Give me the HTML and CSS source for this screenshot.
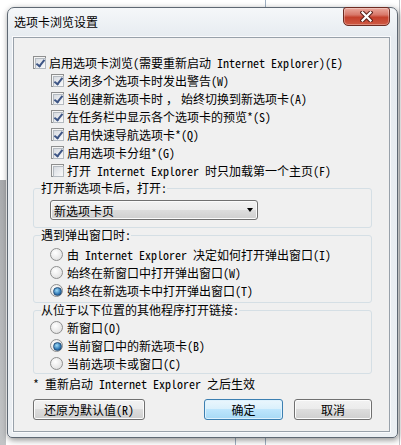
FILE: index.html
```html
<!DOCTYPE html>
<html lang="zh-CN">
<head>
    <meta charset="UTF-8">
    <meta name="viewport" content="width=device-width, initial-scale=1.0">
    <title>选项卡浏览设置</title>
    <link rel="stylesheet" href="styles.css">
</head>
<body>
    <div class="window">
        <div class="titlebar">
            <span class="title">选项卡浏览设置</span>
            <div class="close">
                <svg width="13" height="11" viewBox="0 0 13 11">
                    <path d="M2.5 1.5 L10.5 9.5 M10.5 1.5 L2.5 9.5" stroke="#5a2019" stroke-width="4.2" stroke-linecap="square" fill="none"/>
                    <path d="M2.5 1.5 L10.5 9.5 M10.5 1.5 L2.5 9.5" stroke="#ffffff" stroke-width="2.2" stroke-linecap="square" fill="none"/>
                </svg>
            </div>
        </div>
        <div class="client">
            <div class="row"><span class="check on"></span>启用选项卡浏览(需要重新启动 Internet Explorer)(E)</div>
            <div class="sub">
                <div class="row"><span class="check on"></span>关闭多个选项卡时发出警告(W)</div>
                <div class="row"><span class="check on"></span>当创建新选项卡时<span class="full">，</span>始终切换到新选项卡(A)</div>
                <div class="row"><span class="check on"></span>在任务栏中显示各个选项卡的预览*(S)</div>
                <div class="row"><span class="check on"></span>启用快速导航选项卡*(Q)</div>
                <div class="row"><span class="check on"></span>启用选项卡分组*(G)</div>
                <div class="row"><span class="check"></span>打开 Internet Explorer 时只加载第一个主页(F)</div>
            </div>

            <fieldset class="group first">
                <legend>打开新选项卡后<span class="full">，</span>打开:</legend>
                <div class="group-body combo-body">
                    <div class="combo"><span>新选项卡页</span><span class="arrow"></span></div>
                </div>
            </fieldset>

            <fieldset class="group">
                <legend>遇到弹出窗口时:</legend>
                <div class="group-body popup-body">
                    <div class="row radio-row"><span class="radio"></span>由 Internet Explorer 决定如何打开弹出窗口(I)</div>
                    <div class="row radio-row"><span class="radio"></span>始终在新窗口中打开弹出窗口(W)</div>
                    <div class="row radio-row"><span class="radio on"></span>始终在新选项卡中打开弹出窗口(T)</div>
                </div>
            </fieldset>

            <fieldset class="group">
                <legend>从位于以下位置的其他程序打开链接:</legend>
                <div class="group-body links-body">
                    <div class="row radio-row"><span class="radio"></span>新窗口(O)</div>
                    <div class="row radio-row"><span class="radio on"></span>当前窗口中的新选项卡(B)</div>
                    <div class="row radio-row"><span class="radio"></span>当前选项卡或窗口(C)</div>
                </div>
            </fieldset>

            <p class="note">* 重新启动 Internet Explorer 之后生效</p>

            <div class="buttons">
                <button class="btn btn-reset">还原为默认值(R)</button>
                <button class="btn btn-ok">确定</button>
                <button class="btn btn-cancel">取消</button>
            </div>
        </div>
    </div>
</body>
</html>
```

FILE: styles.css
```css
* {
    box-sizing: border-box;
}
body {
    margin: 0;
    padding: 7px 0 0 7px;
    width: 401px;
    height: 445px;
    overflow: hidden;
    background-color: #fff;
    background-image:
        linear-gradient(#9fb0c2, #9fb0c2),
        linear-gradient(#9fb0c2, #9fb0c2),
        linear-gradient(#c4c7cb, #c4c7cb),
        linear-gradient(#a9abae, #c2c4c6);
    background-size: 1px 445px, 1px 12px, 1px 445px, 6px 265px;
    background-position: 265px 0, 235px 433px, 399px 0, 0 180px;
    background-repeat: no-repeat;
    font-family: "Noto Sans CJK SC", "Liberation Sans", sans-serif;
    font-size: 12px;
    font-feature-settings: "hwid";
    color: #000;
}
.full {
    font-feature-settings: normal;
}
.window {
    width: 391px;
    height: 431px;
    padding: 0 7px 5px 5px;
    border: 1px solid #5e6873;
    border-radius: 7px 7px 5px 5px;
    background: linear-gradient(#f5f7f9, #e6ebf0 30px, #ebeff3);
    box-shadow: 1px 2px 6px rgba(0, 0, 0, 0.45);
    display: flex;
    flex-direction: column;
}
.titlebar {
    height: 29px;
    display: flex;
    justify-content: space-between;
    align-items: flex-start;
}
.title {
    padding: 7px 0 0 1px;
    line-height: 14px;
}
.close {
    width: 47px;
    height: 19px;
    margin-top: -1px;
    border: 1px solid #6d2b22;
    border-radius: 3px 3px 5px 5px;
    background: linear-gradient(#eba99d, #d8786a 40%, #c4402c 55%, #cf5a44 100%);
    box-shadow: inset 0 0 0 1px rgba(255, 255, 255, 0.3);
    display: flex;
    justify-content: center;
    align-items: center;
}
.client {
    flex: 1;
    padding: 15px 17px 6px 19px;
    background: #f0f0f0;
    border: 1px solid #98a1aa;
    box-shadow: 0 0 0 1px #f9fafc;
}
.row {
    display: flex;
    align-items: center;
    gap: 3px;
    height: 18px;
    white-space: nowrap;
}
.sub .row {
    padding-left: 18px;
}
.radio-row {
    gap: 4px;
}
.check {
    position: relative;
    flex: none;
    width: 13px;
    height: 13px;
    padding: 1px;
    border: 1px solid #8e8f8f;
    background: #f4f4f4;
}
.check::before {
    content: "";
    display: block;
    width: 9px;
    height: 9px;
    border: 1px solid #b4bac0;
    background: linear-gradient(135deg, #d6dae0, #fbfbfb);
}
.check.on::after {
    content: "";
    position: absolute;
    left: 4px;
    top: 1px;
    width: 3px;
    height: 7px;
    border: solid #3d5585;
    border-width: 0 2px 2px 0;
    transform: rotate(38deg);
}
.radio {
    position: relative;
    flex: none;
    width: 13px;
    height: 13px;
    border: 1px solid #8e8f8f;
    border-radius: 50%;
    background: radial-gradient(circle at 40% 35%, #fff, #e6e6e6 65%, #cfcfcf);
}
.radio.on::after {
    content: "";
    position: absolute;
    left: 2px;
    top: 2px;
    width: 7px;
    height: 7px;
    border-radius: 50%;
    border: 1px solid #26507a;
    background: radial-gradient(circle at 40% 35%, #9fdcf8, #2f77b4 60%, #1a4a7c);
}
.group {
    margin: 0;
    padding: 0;
    min-width: 0;
    border: 1px solid #d5dfe5;
    border-radius: 3px;
}
.group.first {
    margin-top: 2px;
}
.group legend {
    margin-left: 7px;
    padding: 0;
    line-height: 14px;
}
.group-body {
    padding: 3px 16px;
}
.combo-body {
    padding: 5px 16px 7px;
}
.links-body {
    padding: 1px 16px;
}
.combo {
    width: 208px;
    height: 20px;
    padding: 0 4px 0 3px;
    border: 1px solid #707070;
    border-radius: 3px;
    background: linear-gradient(#f2f2f2, #ebebeb 50%, #dddddd 50%, #cfcfcf);
    box-shadow: inset 0 0 0 1px #fbfbfb;
    display: flex;
    justify-content: space-between;
    align-items: center;
}
.arrow {
    width: 0;
    height: 0;
    border-top: 4px solid #000;
    border-left: 3.5px solid transparent;
    border-right: 3.5px solid transparent;
}
.note {
    margin: 3px 0 0;
    line-height: 14px;
}
.buttons {
    display: flex;
    gap: 11px;
    margin-top: 8px;
}
.btn {
    height: 21px;
    padding: 0;
    font: inherit;
    color: #000;
    border: 1px solid #707070;
    border-radius: 3px;
    background: linear-gradient(#f2f2f2, #ebebeb 50%, #dddddd 50%, #cfcfcf);
    box-shadow: inset 0 0 0 1px #fcfcfc;
}
.btn-reset {
    width: 112px;
}
.btn-ok {
    width: 79px;
    margin-left: auto;
    border-color: #3c7fb1;
    background: linear-gradient(#eaf6fd, #d9f0fc 50%, #bee6fd 50%, #a7d9f5);
    box-shadow: inset 0 0 0 1px #dff2fd;
}
.btn-cancel {
    width: 78px;
}
```
